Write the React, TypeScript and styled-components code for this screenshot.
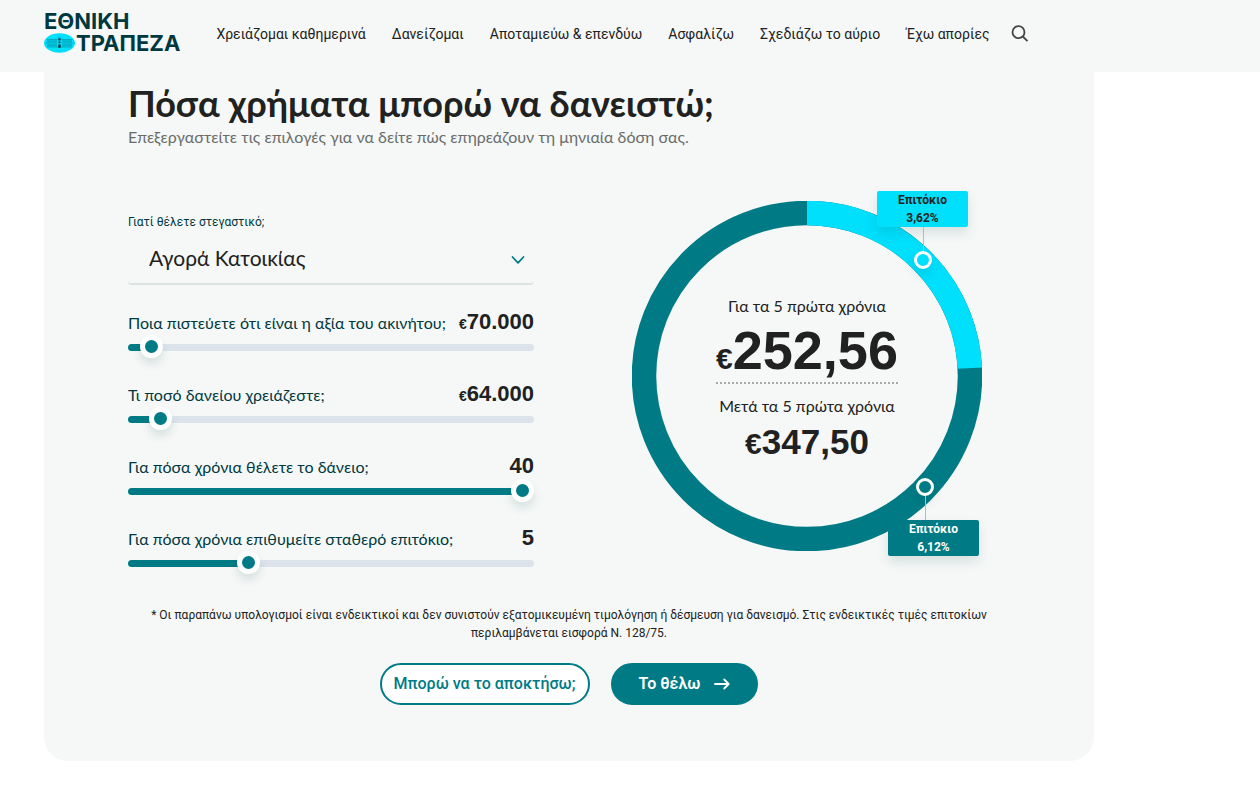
import React, { useId, useState } from 'react';
import styled, { createGlobalStyle, css } from 'styled-components';

const color = {
  surface: '#f5f8f7',
  teal: '#007b85',
  cyan: '#00dffc',
  deep: '#003841',
  ink: '#212121',
  muted: '#6a6c6b',
  track: '#dce3eb',
};

const text = '"Lato", "Open Sans", sans-serif';
const small = '"Roboto", "Open Sans", sans-serif';
const figures = '"Liberation Sans", Arial, sans-serif';

const GlobalStyle = createGlobalStyle`
  *, *::before, *::after { box-sizing: border-box; }
  body {
    margin: 0;
    background: #fff;
    color: ${color.ink};
    font-family: ${text};
  }
  h1, p { margin: 0; }
  button, input, select { font: inherit; }
`;

const Header = styled.header`
  display: flex;
  align-items: center;
  gap: 36px;
  min-height: 72px;
  padding: 0 44px 8px;
  background: ${color.surface};
`;

const Logo = styled.a`
  display: flex;
  flex-direction: column;
  color: ${color.deep};
  font: 700 22px/22px "Inter", sans-serif;
  text-decoration: none;
`;

const LogoLine = styled.span`
  display: flex;
  align-items: center;
  gap: 1px;
`;

const Nav = styled.nav`
  display: flex;
  align-items: center;
  gap: 26px;
  padding-top: 4px;
`;

const NavLink = styled.a`
  color: ${color.ink};
  font: 400 14px/20px ${small};
  text-decoration: none;
  white-space: nowrap;
`;

const SearchButton = styled.button`
  display: flex;
  margin-left: -5px;
  padding: 0;
  border: 0;
  background: none;
  color: #424545;
`;

const Card = styled.main`
  max-width: 1050px;
  margin-left: 44px;
  padding: 9px 84px 56px;
  border-radius: 0 0 24px 24px;
  background: ${color.surface};
`;

const Title = styled.h1`
  font-size: 36px;
  font-weight: 700;
  line-height: 44px;
`;

const Subtitle = styled.p`
  color: ${color.muted};
  font-size: 16px;
  line-height: 24px;
`;

const Calculator = styled.div`
  display: grid;
  grid-template-columns: 1fr 1fr;
  gap: 70px;
  align-items: start;
  margin-top: 52px;
`;

const Form = styled.form`
  display: flex;
  flex-direction: column;
  padding-top: 12px;
`;

const SelectLabel = styled.label`
  color: ${color.deep};
  font: 400 12px/18px ${small};
`;

const SelectBox = styled.div`
  position: relative;
  display: flex;
  margin-bottom: 23px;

  svg {
    position: absolute;
    right: 9px;
    top: 24px;
    pointer-events: none;
  }
`;

const Select = styled.select`
  width: 100%;
  height: 54px;
  padding: 0 40px 0 21px;
  appearance: none;
  border: 0;
  border-bottom: 2px solid #dde3e1;
  border-radius: 4px;
  background: transparent;
  color: ${color.ink};
  font-size: 21px;
`;

const Sliders = styled.div`
  display: flex;
  flex-direction: column;
  gap: 21px;
`;

const SliderHead = styled.div`
  display: flex;
  align-items: baseline;
  justify-content: space-between;
  height: 28px;
  line-height: 28px;
`;

const SliderLabel = styled.label`
  color: ${color.deep};
  font-size: 16px;
`;

const SliderValue = styled.output`
  font: 700 22px/28px ${figures};
`;

const SmallEuro = styled.span`
  font-size: 14px;
`;

const Range = styled.input`
  display: block;
  width: 100%;
  height: 23px;
  margin: 0;
  appearance: none;
  background: transparent;

  &::-webkit-slider-runnable-track {
    height: 7px;
    border-radius: 4px;
    background: linear-gradient(to right, ${color.teal} var(--fill), ${color.track} var(--fill));
  }

  &::-webkit-slider-thumb {
    width: 23px;
    height: 23px;
    margin-top: -9px;
    appearance: none;
    border: 5px solid #fff;
    border-radius: 50%;
    background: ${color.teal};
    box-shadow: 0 6px 10px rgba(0, 56, 65, 0.12);
  }
`;

const Chart = styled.div`
  position: relative;
  display: grid;
  place-items: center;
  justify-self: center;
  width: 350px;

  > * { grid-area: 1 / 1; }
`;

const Result = styled.div`
  display: flex;
  flex-direction: column;
  align-items: center;
  padding-top: 7px;
`;

const ResultLabel = styled.p`
  font-size: 16px;
  line-height: 24px;
`;

const Amount = styled.p<{ $large?: boolean }>`
  font-family: ${figures};
  font-weight: 700;
  ${({ $large }) =>
    $large
      ? css`
          margin-bottom: 10px;
          border-bottom: 2px dotted #a5aaa9;
          font-size: 54px;
          line-height: 64px;
        `
      : css`
          font-size: 35px;
          line-height: 48px;
        `}
`;

const Euro = styled.span`
  font-size: 30px;
  line-height: 1;
`;

const Callout = styled.div<{ $tone: 'cyan' | 'teal' }>`
  position: absolute;
  display: flex;
  width: 91px;
  ${({ $tone }) =>
    $tone === 'cyan'
      ? css`
          top: -10px;
          left: 245px;
          flex-direction: column;
        `
      : css`
          top: 277px;
          left: 256px;
          flex-direction: column-reverse;
        `}
`;

const Tag = styled.div<{ $tone: 'cyan' | 'teal' }>`
  border-radius: 2px;
  background: ${({ $tone }) => color[$tone]};
  box-shadow: 0 6px 12px rgba(0, 56, 65, 0.12);
  color: ${({ $tone }) => ($tone === 'cyan' ? color.ink : '#fff')};
  font: 700 12px/18px ${small};
  text-align: center;
`;

const Pin = styled.div<{ $tone: 'cyan' | 'teal' }>`
  display: flex;
  flex-direction: inherit;
  align-items: center;
  width: 18px;
  margin-left: ${({ $tone }) => ($tone === 'cyan' ? 37 : 28)}px;
`;

const Stem = styled.span`
  width: 1px;
  height: 24px;
  background: #b4bcbb;
`;

const Knob = styled.span<{ $tone: 'cyan' | 'teal' }>`
  width: 18px;
  height: 18px;
  border: 3px solid #fff;
  border-radius: 50%;
  background: ${({ $tone }) => color[$tone]};
  box-shadow: 0 6px 12px rgba(0, 56, 65, 0.12);
`;

const Note = styled.p`
  margin-top: 31px;
  padding: 0 20px;
  font: 400 12px/18px ${small};
  text-align: center;
`;

const Actions = styled.div`
  display: flex;
  justify-content: center;
  gap: 21px;
  margin-top: 21px;
`;

const Button = styled.button<{ $primary?: boolean }>`
  display: flex;
  align-items: center;
  justify-content: center;
  gap: 14px;
  height: 42px;
  padding: 0 ${({ $primary }) => ($primary ? 26 : 12)}px;
  border: 2px solid ${color.teal};
  border-radius: 21px;
  background: ${({ $primary }) => ($primary ? color.teal : '#fff')};
  color: ${({ $primary }) => ($primary ? '#fff' : color.teal)};
  font: ${({ $primary }) => ($primary ? 600 : 500)} 16px/20px ${small};
`;

const links = [
  'Χρειάζομαι καθημερινά',
  'Δανείζομαι',
  'Αποταμιεύω & επενδύω',
  'Ασφαλίζω',
  'Σχεδιάζω το αύριο',
  'Έχω απορίες',
];

const sliders = [
  { label: 'Ποια πιστεύετε ότι είναι η αξία του ακινήτου;', min: 10000, max: 2000000, step: 1000, start: 70000, euro: true },
  { label: 'Τι ποσό δανείου χρειάζεστε;', min: 10000, max: 1000000, step: 1000, start: 64000, euro: true },
  { label: 'Για πόσα χρόνια θέλετε το δάνειο;', min: 5, max: 40, step: 1, start: 40, euro: false },
  { label: 'Για πόσα χρόνια επιθυμείτε σταθερό επιτόκιο;', min: 1, max: 15, step: 1, start: 5, euro: false },
];

const groupThousands = (n: number) => String(n).replace(/\B(?=(\d{3})+$)/g, '.');

function Slider({ label, min, max, step, start, euro }: (typeof sliders)[number]) {
  const id = useId();
  const [value, setValue] = useState(start);
  const ratio = (value - min) / (max - min);
  const fill = { '--fill': `calc(12px + (100% - 23px) * ${ratio})` } as React.CSSProperties;
  return (
    <div>
      <SliderHead>
        <SliderLabel htmlFor={id}>{label}</SliderLabel>
        <SliderValue htmlFor={id}>
          {euro && <SmallEuro>€</SmallEuro>}
          {groupThousands(value)}
        </SliderValue>
      </SliderHead>
      <Range
        id={id}
        type="range"
        min={min}
        max={max}
        step={step}
        value={value}
        onChange={(e) => setValue(Number(e.target.value))}
        style={fill}
      />
    </div>
  );
}

function Emblem() {
  const columns = [4, 6, 8, 10, 12, 19, 21, 23, 25, 27];
  return (
    <svg width="31" height="20" viewBox="0 0 31 20" aria-hidden="true">
      <ellipse cx="15.5" cy="10" rx="15.5" ry="9.7" fill={color.cyan} />
      <g stroke={color.deep} fill="none" strokeWidth="0.5" opacity="0.6">
        <path d="M2.5 6.5H13.5M17.5 6.5H28.5M1.5 10H13.5M17.5 10H29.5M3 14H28M13.5 5.5L15.5 4.2L17.5 5.5" />
        {columns.map((x) => (
          <path key={x} d={`M${x} 7.2V9.4M${x} 10.8V13.4`} strokeWidth="0.8" />
        ))}
      </g>
      <path d="M14.3 5.6h2.4v1.8h-2.4zM14.6 8.6h1.8v1.6h-1.8zM14.3 11.6h2.4v3.2h-2.4z" fill={color.deep} />
    </svg>
  );
}

/* Repayment ring: the fixed-rate share starts at twelve o'clock. */
function Ring() {
  const radius = 163;
  const length = 2 * Math.PI * radius;
  const share = 87.2 / 360;
  return (
    <svg width="350" height="350" viewBox="0 0 350 350" fill="none" strokeWidth="24.5" aria-hidden="true">
      <circle cx="175" cy="175" r={radius} stroke={color.teal} />
      <circle
        cx="175"
        cy="175"
        r={radius}
        stroke={color.cyan}
        strokeDasharray={`${length * share} ${length}`}
        transform="rotate(-90 175 175)"
      />
    </svg>
  );
}

export default function App() {
  return (
    <>
      <GlobalStyle />
      <Header>
        <Logo href="#">
          <LogoLine>ΕΘΝΙΚΗ</LogoLine>
          <LogoLine>
            <Emblem />
            ΤΡΑΠΕΖΑ
          </LogoLine>
        </Logo>
        <Nav>
          {links.map((link) => (
            <NavLink key={link} href="#">
              {link}
            </NavLink>
          ))}
          <SearchButton type="button" aria-label="Αναζήτηση">
            <svg width="18" height="18" viewBox="0 0 18 18" fill="none" stroke="currentColor" strokeWidth="1.8">
              <circle cx="7.5" cy="7.2" r="6" />
              <path d="M11.8 11.5L16.5 16.2" />
            </svg>
          </SearchButton>
        </Nav>
      </Header>
      <Card>
        <Title>Πόσα χρήματα μπορώ να δανειστώ;</Title>
        <Subtitle>Επεξεργαστείτε τις επιλογές για να δείτε πώς επηρεάζουν τη μηνιαία δόση σας.</Subtitle>
        <Calculator>
          <Form>
            <SelectLabel htmlFor="purpose">Γιατί θέλετε στεγαστικό;</SelectLabel>
            <SelectBox>
              <Select id="purpose">
                <option>Αγορά Κατοικίας</option>
              </Select>
              <svg width="14" height="10" viewBox="0 0 14 10" fill="none" stroke={color.teal} strokeWidth="1.8" strokeLinecap="round" strokeLinejoin="round">
                <path d="M1.5 2L7 7.8L12.5 2" />
              </svg>
            </SelectBox>
            <Sliders>
              {sliders.map((slider) => (
                <Slider key={slider.label} {...slider} />
              ))}
            </Sliders>
          </Form>
          <Chart>
            <Ring />
            <Result>
              <ResultLabel>Για τα 5 πρώτα χρόνια</ResultLabel>
              <Amount $large>
                <Euro>€</Euro>252,56
              </Amount>
              <ResultLabel>Μετά τα 5 πρώτα χρόνια</ResultLabel>
              <Amount>
                <Euro>€</Euro>347,50
              </Amount>
            </Result>
            <Callout $tone="cyan">
              <Tag $tone="cyan">
                Επιτόκιο
                <br />
                3,62%
              </Tag>
              <Pin $tone="cyan">
                <Stem />
                <Knob $tone="cyan" />
              </Pin>
            </Callout>
            <Callout $tone="teal">
              <Tag $tone="teal">
                Επιτόκιο
                <br />
                6,12%
              </Tag>
              <Pin $tone="teal">
                <Stem />
                <Knob $tone="teal" />
              </Pin>
            </Callout>
          </Chart>
        </Calculator>
        <Note>
          * Οι παραπάνω υπολογισμοί είναι ενδεικτικοί και δεν συνιστούν εξατομικευμένη τιμολόγηση ή δέσμευση για
          δανεισμό. Στις ενδεικτικές τιμές επιτοκίων περιλαμβάνεται εισφορά Ν. 128/75.
        </Note>
        <Actions>
          <Button type="button">Μπορώ να το αποκτήσω;</Button>
          <Button type="button" $primary>
            Το θέλω
            <svg width="16" height="12" viewBox="0 0 16 12" fill="none" stroke="currentColor" strokeWidth="1.8" strokeLinecap="round" strokeLinejoin="round">
              <path d="M1 6H14.5M10.2 1.5L14.7 6L10.2 10.5" />
            </svg>
          </Button>
        </Actions>
      </Card>
    </>
  );
}
